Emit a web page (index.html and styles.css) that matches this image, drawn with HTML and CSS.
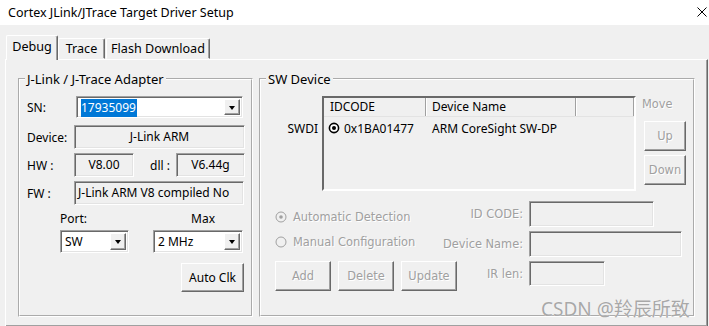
FILE: index.html
```html
<!DOCTYPE html>
<html lang="en">
<head>
    <meta charset="UTF-8">
    <title>Cortex JLink/JTrace Target Driver Setup</title>
    <link rel="stylesheet" href="styles.css">
</head>
<body>
    <div class="titlebar">
        <span class="title">Cortex JLink/JTrace Target Driver Setup</span>
        <svg class="close" viewBox="0 0 10 10" width="10" height="10">
            <path d="M0.5 0.5 L9.5 9.5 M9.5 0.5 L0.5 9.5" stroke="#000" stroke-width="1" fill="none"/>
        </svg>
    </div>

    <div class="tabs">
        <div class="tab active">Debug</div>
        <div class="tab trace">Trace</div>
        <div class="tab flash">Flash Download</div>
    </div>

    <div class="panel">
        <fieldset class="group adapter">
            <legend>J-Link / J-Trace Adapter</legend>
            <div class="row sn-row">
                <span class="lbl">SN:</span>
                <div class="combo sn">
                    <span class="val"><span class="sel">17935099</span></span>
                    <span class="drop"><i></i></span>
                </div>
            </div>
            <div class="row">
                <span class="lbl">Device:</span>
                <div class="field wide">J-Link ARM</div>
            </div>
            <div class="row">
                <span class="lbl">HW :</span>
                <div class="field hw">V8.00</div>
                <span class="lbl dll">dll :</span>
                <div class="field dllv">V6.44g</div>
            </div>
            <div class="row">
                <span class="lbl">FW :</span>
                <div class="field wide fw">J-Link ARM V8 compiled No</div>
            </div>
            <div class="port-labels">
                <span class="port-lbl">Port:</span>
                <span class="max-lbl">Max</span>
            </div>
            <div class="port-row">
                <div class="combo port">
                    <span class="val">SW</span>
                    <span class="drop"><i></i></span>
                </div>
                <div class="combo max">
                    <span class="val">2 MHz</span>
                    <span class="drop"><i></i></span>
                </div>
            </div>
            <div class="auto-row">
                <button class="btn auto">Auto Clk</button>
            </div>
        </fieldset>

        <fieldset class="group swdev">
            <legend>SW Device</legend>
            <div class="dev-top">
                <span class="swdi">SWDI</span>
                <div class="list">
                    <div class="lhead">
                        <span class="c1">IDCODE</span>
                        <span class="c2">Device Name</span>
                        <span class="c3"></span>
                    </div>
                    <div class="lrow">
                        <span class="c1">
                            <svg class="pick" viewBox="0 0 12 12" width="12" height="12">
                                <circle cx="6" cy="6" r="4.6" fill="#fff" stroke="#000" stroke-width="1.6"/>
                                <circle cx="6" cy="6" r="2" fill="#000"/>
                            </svg>
                            0x1BA01477
                        </span>
                        <span class="c2">ARM CoreSight SW-DP</span>
                    </div>
                </div>
                <div class="move">
                    <span class="dis move-lbl">Move</span>
                    <button class="btn dis updown">Up</button>
                    <button class="btn dis updown">Down</button>
                </div>
            </div>

            <div class="dev-bottom">
                <div class="dev-left">
                    <div class="radio dis">
                        <svg viewBox="0 0 12 12" width="12" height="12">
                            <circle cx="6" cy="6" r="5" fill="#f0f0f0" stroke="#a0a0a0" stroke-width="1"/>
                            <circle cx="6" cy="6" r="1.8" fill="#a0a0a0"/>
                        </svg>
                        Automatic Detection
                    </div>
                    <div class="radio dis">
                        <svg viewBox="0 0 12 12" width="12" height="12">
                            <circle cx="6" cy="6" r="5" fill="#f0f0f0" stroke="#a0a0a0" stroke-width="1"/>
                        </svg>
                        Manual Configuration
                    </div>
                    <div class="btns">
                        <button class="btn dis wbtn">Add</button>
                        <button class="btn dis wbtn">Delete</button>
                        <button class="btn dis wbtn">Update</button>
                    </div>
                </div>
                <div class="dev-form">
                    <span class="dis flbl">ID CODE:</span>
                    <div class="input idc"></div>
                    <span class="dis flbl">Device Name:</span>
                    <div class="input dname"></div>
                    <span class="dis flbl">IR len:</span>
                    <div class="input irlen"></div>
                </div>
            </div>
        </fieldset>
    </div>

    <div class="watermark">CSDN @羚辰所致</div>
</body>
</html>
```

FILE: styles.css
```css
* {
    box-sizing: border-box;
}
body {
    margin: 0;
    width: 709px;
    height: 326px;
    overflow: hidden;
    background: #f0f0f0;
    font: 12px "Noto Sans", "Noto Sans CJK SC", sans-serif;
    color: #000;
}

/* window title */
.titlebar {
    height: 25px;
    background: #fff;
    display: flex;
    align-items: center;
    justify-content: space-between;
    padding: 0 2px 1px 8px;
    font-size: 12.5px;
}

/* tabs */
.tabs {
    display: flex;
    align-items: flex-end;
    height: 34px;
    padding-left: 6px;
    font-size: 12.6px;
}
.tab {
    height: 21px;
    border: 1px solid;
    border-color: #fff #696969 transparent #fff;
    box-shadow: inset -1px 0 #a0a0a0;
    border-radius: 2px 2px 0 0;
    text-align: center;
    line-height: 19px;
    white-space: nowrap;
}
.tab.active {
    position: relative;
    width: 52px;
    height: 25px;
    margin-bottom: -1px;
    background: #f0f0f0;
    border-bottom: none;
    line-height: 22px;
}
.tab.trace { width: 47px; }
.tab.flash { width: 104px; margin-left: 1px; }

.panel {
    margin-left: 5px;
    width: 703px;
    height: 268px;
    border: 1px solid;
    border-color: #fff #696969 #696969 #fff;
    box-shadow: inset -1px -1px #a0a0a0;
    padding: 11px 0 0 12px;
    display: flex;
    align-items: flex-start;
    gap: 6px;
}

/* group boxes */
.group {
    margin: 0;
    padding: 0;
    border: 2px groove #fff;
    height: 246px;
}
.group legend {
    margin-left: 5px;
    padding: 0 2px;
    line-height: 16px;
    font-size: 13px;
}
.adapter { width: 235px; }
.swdev { width: 436px; }

/* sunken boxes */
.field, .combo, .input {
    border: 1px solid;
    border-color: #a0a0a0 #fff #fff #a0a0a0;
    box-shadow: inset 1px 1px #696969, inset -1px -1px #e3e3e3;
}

.row {
    display: flex;
    align-items: center;
    padding-left: 7px;
    margin-top: 4px;
}
.row.sn-row { margin-top: 9px; }
.row:nth-child(3) { margin-top: 7px; }
.lbl {
    width: 47px;
    white-space: nowrap;
}
.lbl.dll {
    width: 26px;
    margin-left: 16px;
}
.field {
    height: 24px;
    line-height: 22px;
    text-align: center;
    white-space: nowrap;
    overflow: hidden;
}
.field.wide { width: 171px; }
.field.fw { width: 170px; text-align: left; padding-left: 3px; }
.field.hw { width: 60px; }
.field.dllv { width: 69px; }

.combo {
    display: flex;
    align-items: center;
    background: #fff;
    padding: 2px;
}
.combo .val {
    flex: 1;
    padding-left: 2px;
    white-space: nowrap;
}
.combo .sel {
    background: #0078d7;
    color: #fff;
    padding: 0 1px 1px 0;
}
.combo .drop {
    width: 16px;
    align-self: stretch;
    background: #f0f0f0;
    border: 1px solid;
    border-color: #fff #696969 #696969 #fff;
    box-shadow: inset -1px -1px #a0a0a0;
    display: flex;
    align-items: center;
    justify-content: center;
}
.combo .drop i {
    width: 0;
    height: 0;
    border-left: 3.5px solid transparent;
    border-right: 3.5px solid transparent;
    border-top: 4px solid #000;
    margin-top: 1px;
}
.combo.sn {
    width: 167px;
    height: 22px;
    margin-left: 2px;
}

.port-labels {
    display: flex;
    height: 16px;
    margin-top: 6px;
    padding-left: 40px;
    line-height: 16px;
}
.max-lbl { margin-left: 104px; }
.port-row {
    display: flex;
    margin-top: 3px;
    padding-left: 40px;
}
.combo.port { width: 69px; height: 23px; }
.combo.max { width: 90px; height: 23px; margin-left: 24px; }

.auto-row {
    margin-top: 10px;
    padding-left: 161px;
}

/* buttons */
.btn {
    font: inherit;
    color: #000;
    background: #f0f0f0;
    border: 1px solid;
    border-color: #fff #696969 #696969 #fff;
    box-shadow: inset -1px -1px #a0a0a0;
    padding: 0;
    margin: 0;
    flex-shrink: 0;
}
.btn.auto { width: 63px; height: 29px; }

/* disabled look */
.dis {
    font-family: "DejaVu Sans", sans-serif;
    font-size: 11.4px;
    color: #a0a0a0;
    text-shadow: 1px 1px #fff;
}
.btn.dis { color: #a0a0a0; }

/* SW Device */
.dev-top {
    display: flex;
    align-items: flex-start;
    margin-top: 9px;
    height: 95px;
}
.swdi {
    width: 57px;
    margin-top: 25px;
    margin-right: 4px;
    text-align: right;
    line-height: 16px;
}
.list {
    width: 314px;
    height: 95px;
    border: 2px solid;
    border-color: #696969 #fff #fff #696969;
}
.lhead {
    display: flex;
    height: 19px;
    border-bottom: 1px solid #e3e3e3;
    line-height: 18px;
}
.lhead span {
    border-right: 1px solid #a0a0a0;
    box-shadow: 1px 0 #fff;
}
.c1 { width: 102px; padding-left: 6px; }
.c2 { width: 150px; padding-left: 6px; }
.c3 { flex: 1; }
.lrow {
    display: flex;
    height: 22px;
    align-items: center;
}
.lrow .c1 {
    display: flex;
    align-items: center;
    gap: 4px;
    padding-left: 4px;
    white-space: nowrap;
}
.lrow .c2 { white-space: nowrap; }

.move {
    display: flex;
    flex-direction: column;
    margin-left: 6px;
}
.move-lbl { line-height: 16px; }
.updown {
    width: 42px;
    height: 30px;
    margin-left: 2px;
}
.move-lbl + .updown { margin-top: 9px; }
.updown + .updown { margin-top: 4px; }

.dev-bottom {
    display: flex;
    margin-top: 10px;
}
.dev-left {
    width: 180px;
    flex-shrink: 0;
    padding: 3px 0 0 14px;
}
.radio {
    display: flex;
    align-items: center;
    gap: 6px;
    height: 25px;
    white-space: nowrap;
}
.btns {
    display: flex;
    gap: 7px;
    margin-top: 7px;
}
.wbtn { width: 56px; height: 30px; }

.dev-form {
    display: grid;
    grid-template-columns: 82px auto;
    grid-template-rows: 26px 26px 25px;
    column-gap: 6px;
    row-gap: 4px;
    align-items: center;
}
.flbl {
    justify-self: end;
    white-space: nowrap;
}
.input {
    height: 100%;
    background: #f0f0f0;
}
.input.idc { width: 125px; }
.input.dname { width: 153px; }
.input.irlen { width: 76px; }

.watermark {
    position: absolute;
    left: 541px;
    top: 294px;
    font: 19px "Noto Sans", "Noto Sans CJK SC", sans-serif;
    color: #a8a8a8;
    text-shadow: 0 0 1px #fff;
    white-space: nowrap;
}
```
